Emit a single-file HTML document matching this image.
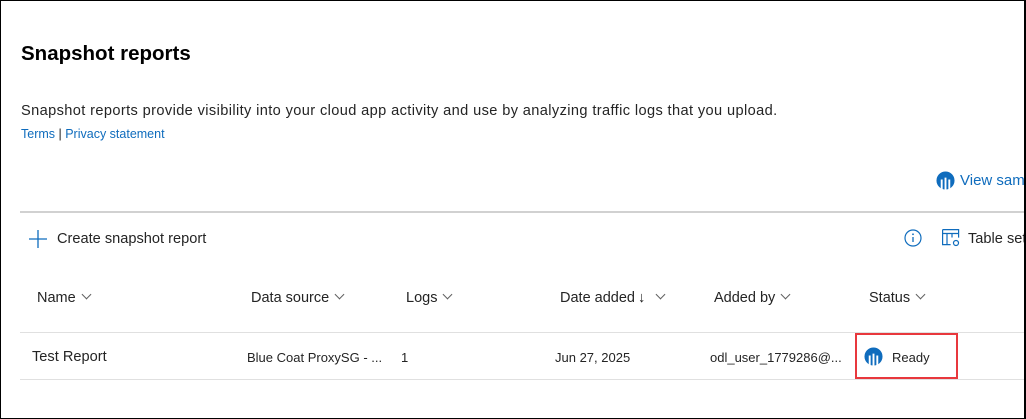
<!DOCTYPE html>
<html><head><meta charset="utf-8"><style>
*{margin:0;padding:0;box-sizing:border-box}
body{width:1026px;height:419px;background:#fff;font-family:"Liberation Sans",sans-serif;color:#242424;position:relative;overflow:hidden}
.frame{position:absolute;left:0;top:0;width:1026px;height:419px;border:1px solid #000;border-right:2px solid #000;overflow:hidden}
.a{position:absolute;white-space:nowrap}
.hl{position:absolute;left:19px;right:0;height:1px;background:#e0e0e0}
.chev{display:inline-block;width:7px;height:7px;border-right:1px solid #616161;border-bottom:1px solid #616161;transform:rotate(45deg);margin-left:7px;position:relative;top:-4px}
.th{font-size:14.5px;color:#242424;top:289px}
.td{font-size:13px;top:349px}
</style></head><body>
<div class="frame">
<div class="a" style="left:20px;top:41px;font-size:20.5px;font-weight:bold;color:#000">Snapshot reports</div>
<div class="a" style="left:20px;top:102px;font-size:14.6px;letter-spacing:0.38px">Snapshot reports provide visibility into your cloud app activity and use by analyzing traffic logs that you upload.</div>
<div class="a" style="left:20px;top:126px;font-size:12.5px;color:#0f6cbd">Terms <span style="color:#242424">|</span> Privacy statement</div>
<svg class="a" style="left:935px;top:170px" width="19" height="19" viewBox="0 0 20 20"><circle cx="10" cy="10" r="9.5" fill="#0f6cbd"/><path d="M6 9v11M10 7v13M14 9v11" stroke="#fff" stroke-width="2"/></svg>
<div class="a" style="left:959px;top:171px;font-size:15px;color:#0f6cbd">View sample</div>
<div class="hl" style="top:210px;height:2px;background:#d1d1d1"></div>
<svg class="a" style="left:28px;top:229px" width="18" height="18"><path d="M9 0v18M0 9h18" stroke="#0f6cbd" stroke-width="1.3"/></svg>
<div class="a" style="left:56px;top:230px;font-size:14.6px">Create snapshot report</div>
<svg class="a" style="left:903px;top:228px" width="18" height="18" viewBox="0 0 18 18"><circle cx="9" cy="9" r="8" fill="none" stroke="#0f6cbd" stroke-width="1.2"/><path d="M9 8v5" stroke="#0f6cbd" stroke-width="1.3"/><circle cx="9" cy="5.3" r="0.9" fill="#0f6cbd"/></svg>
<svg class="a" style="left:941px;top:228px" width="20" height="19" viewBox="0 0 20 19"><path d="M0.6 0.6h16v8M0.6 0.6v15h8M0.6 4.5h16M5 4.5v11M10 4.5v4" fill="none" stroke="#0f6cbd" stroke-width="1.2"/><circle cx="14" cy="14" r="2.5" fill="none" stroke="#0f6cbd" stroke-width="1.2"/></svg>
<div class="a" style="left:967px;top:230px;font-size:14.6px">Table settings</div>
<div class="a th" style="left:36px">Name<span class="chev"></span></div>
<div class="a th" style="left:250px">Data source<span class="chev"></span></div>
<div class="a th" style="left:405px">Logs<span class="chev"></span></div>
<div class="a th" style="left:559px">Date added<span style="margin-left:3px">↓</span><span class="chev" style="margin-left:12px"></span></div>
<div class="a th" style="left:713px">Added by<span class="chev"></span></div>
<div class="a th" style="left:868px">Status<span class="chev"></span></div>
<div class="hl" style="top:331px"></div>
<div class="a" style="left:31px;top:348px;font-size:14.6px">Test Report</div>
<div class="a td" style="left:246px">Blue Coat ProxySG - ...</div>
<div class="a td" style="left:400px">1</div>
<div class="a td" style="left:554px">Jun 27, 2025</div>
<div class="a td" style="left:709px">odl_user_1779286@...</div>
<div class="a" style="left:854px;top:332px;width:103px;height:46px;border:2px solid #e8383d"></div>
<svg class="a" style="left:863px;top:346px" width="19" height="19" viewBox="0 0 20 20"><circle cx="10" cy="10" r="9.5" fill="#0f6cbd"/><path d="M6 9v11M10 7v13M14 9v11" stroke="#fff" stroke-width="2"/></svg>
<div class="a td" style="left:891px">Ready</div>
<div class="hl" style="top:378px"></div>
</div>
</body></html>
